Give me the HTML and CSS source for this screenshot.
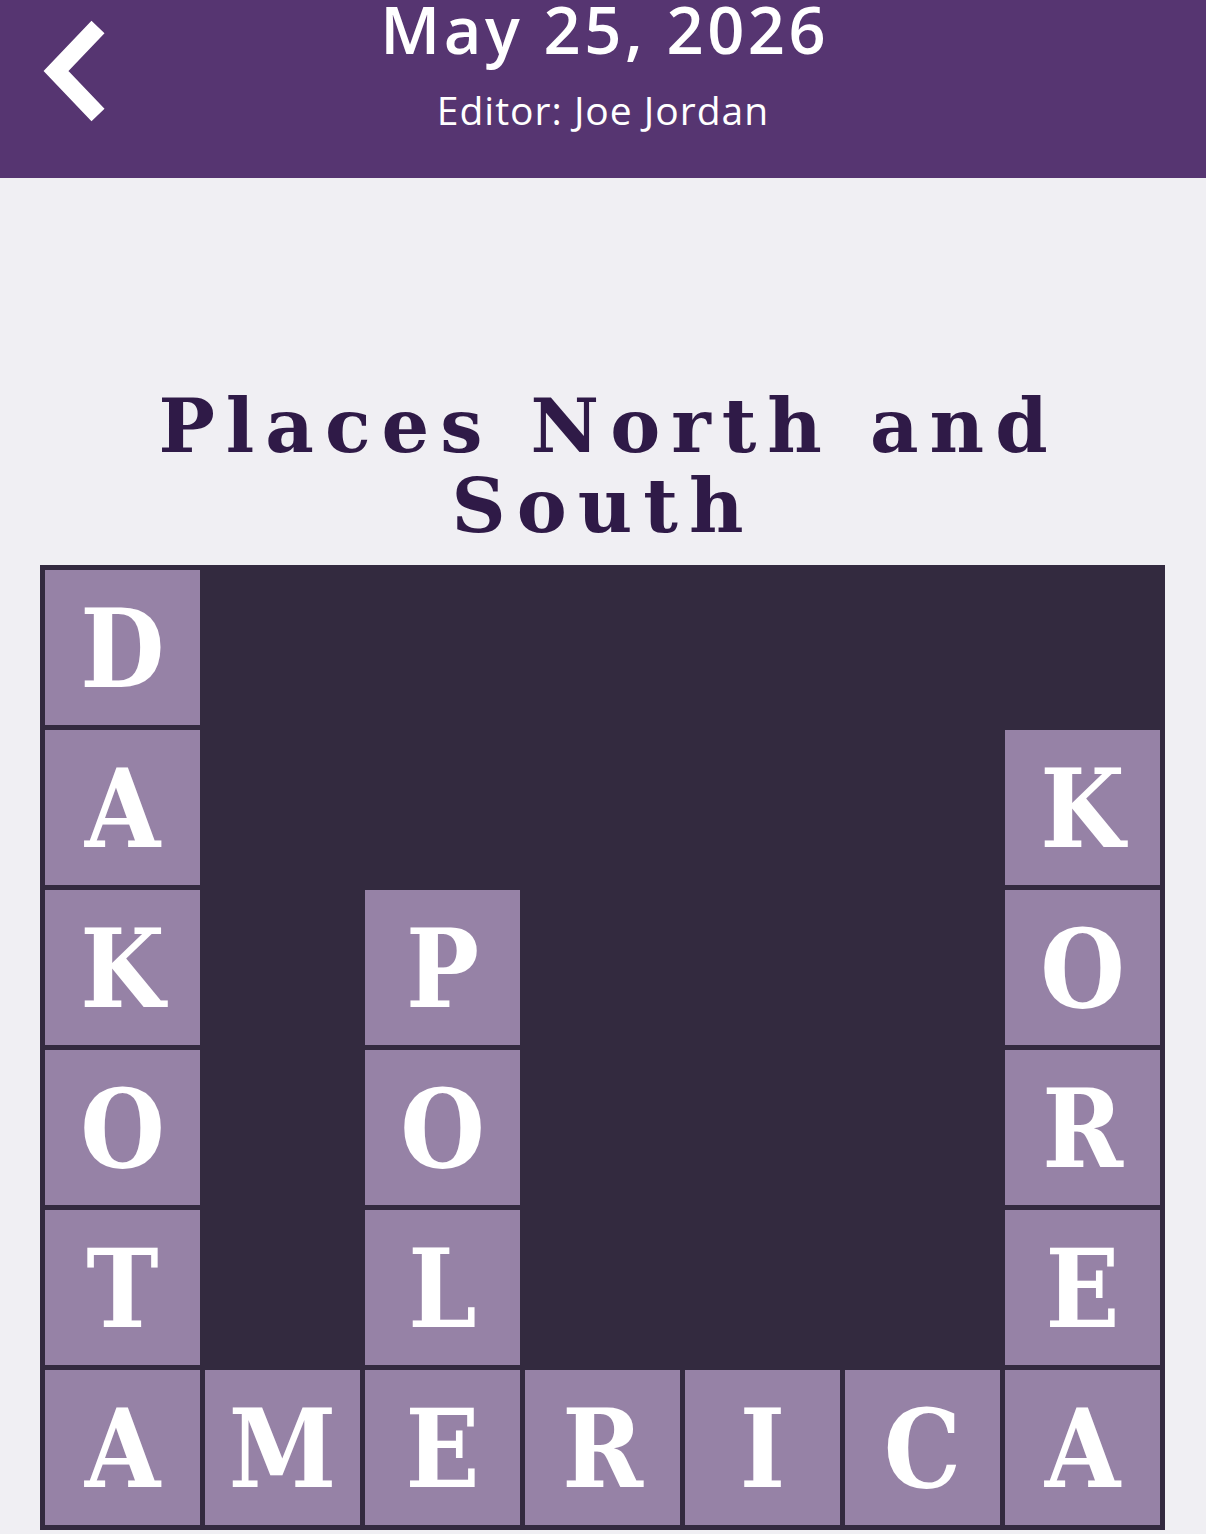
FILE: index.html
```html
<!DOCTYPE html>
<html lang="en">
<head>
<meta charset="utf-8">
<title>Places North and South</title>
<link rel="stylesheet" href="styles.css">
</head>
<body>
<header class="topbar">
  <button class="back" aria-label="Back">
    <svg width="120" height="140" viewBox="0 0 120 140">
      <polyline points="98,27 56,71 98,115" fill="none" stroke="#fff" stroke-width="18" stroke-linejoin="miter" stroke-linecap="butt"/>
    </svg>
  </button>
  <div class="heading">
    <div class="date">May 25, 2026</div>
    <div class="editor">Editor: Joe Jordan</div>
  </div>
</header>
<main class="puzzle">
  <h1 class="title">Places North and South</h1>
  <div class="board">
    <div class="tile">D</div><div class="gap"></div><div class="gap"></div><div class="gap"></div><div class="gap"></div><div class="gap"></div><div class="gap"></div>
    <div class="tile">A</div><div class="gap"></div><div class="gap"></div><div class="gap"></div><div class="gap"></div><div class="gap"></div><div class="tile">K</div>
    <div class="tile">K</div><div class="gap"></div><div class="tile">P</div><div class="gap"></div><div class="gap"></div><div class="gap"></div><div class="tile">O</div>
    <div class="tile">O</div><div class="gap"></div><div class="tile">O</div><div class="gap"></div><div class="gap"></div><div class="gap"></div><div class="tile">R</div>
    <div class="tile">T</div><div class="gap"></div><div class="tile">L</div><div class="gap"></div><div class="gap"></div><div class="gap"></div><div class="tile">E</div>
    <div class="tile">A</div><div class="tile">M</div><div class="tile">E</div><div class="tile">R</div><div class="tile">I</div><div class="tile">C</div><div class="tile">A</div>
  </div>
</main>
</body>
</html>
```
FILE: styles.css
```css
html, body {
  margin: 0;
  padding: 0;
}

body {
  background: #f0eff3;
  width: 1206px;
  height: 1534px;
  overflow: hidden;
}

.topbar {
  position: relative;
  height: 178px;
  background: #563571;
  color: #fff;
  font-family: "Open Sans", Lato, sans-serif;
}

/* back chevron sits over the left of the bar */
.back {
  position: absolute;
  left: 0;
  top: 0;
  padding: 0;
  border: 0;
  background: none;
  width: 120px;
  height: 140px;
}

.back svg {
  display: block;
}

.heading {
  display: flex;
  flex-direction: column;
  align-items: center;
}

.date {
  font-size: 65px;
  font-weight: 600;
  line-height: 58px;
  letter-spacing: 3.5px;
  text-indent: 3.5px;
}

.editor {
  margin-top: 32px;
  font-size: 39px;
  line-height: 40px;
  font-weight: 400;
  letter-spacing: 1px;
}

.puzzle {
  padding: 208px 40px 0;
}

.title {
  margin: 0 0 19px;
  font-family: "DejaVu Serif", "Liberation Serif", serif;
  font-weight: 700;
  font-size: 75px;
  line-height: 80px;
  letter-spacing: 11px;
  text-indent: 11px;
  text-align: center;
  color: #2f1a47;
}

.board {
  display: grid;
  grid-template-columns: repeat(7, 155px);
  grid-auto-rows: 155px;
  gap: 5px;
  padding: 5px;
  width: max-content;
  background: #332a3f;
}

.tile {
  display: flex;
  align-items: flex-start;
  justify-content: center;
  overflow: hidden;
  background: #9682a6;
  color: #fff;
  font-family: "DejaVu Serif Condensed", "DejaVu Serif", serif;
  font-weight: 700;
  font-size: 108px;
  line-height: 159px;
}
```
